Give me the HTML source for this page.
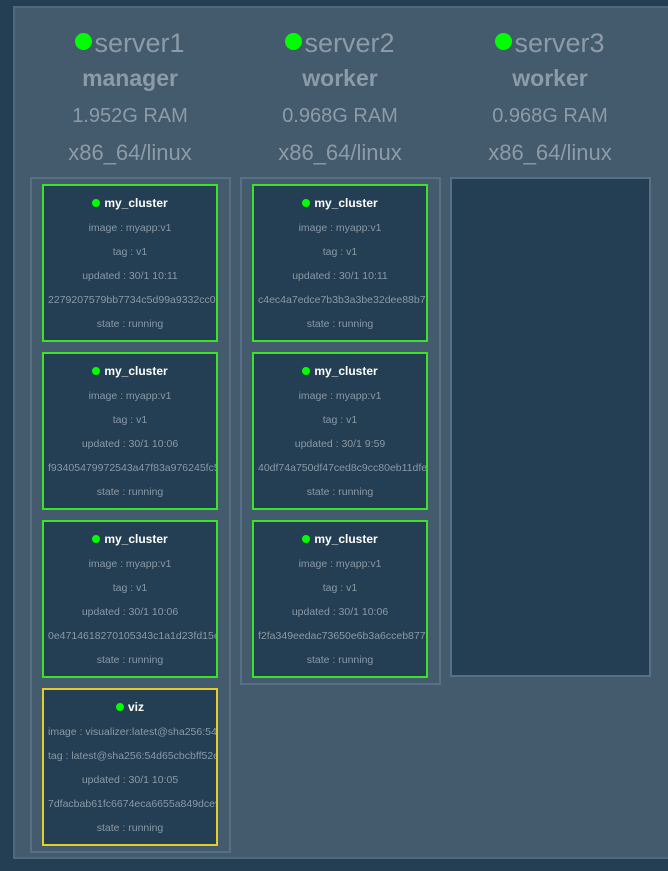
<!DOCTYPE html>
<html><head><style>
*{margin:0;padding:0;box-sizing:border-box}
body{width:668px;height:871px;background:#243f53;font-family:"Liberation Sans",sans-serif;position:relative;overflow:hidden}
.panel{position:absolute;left:13px;top:6px;width:670px;height:853px;background:#445b6d;border:2px solid #52697b}
.hdr{position:absolute;width:210px;text-align:center;color:#8d9ba8}
.name{top:28px;font-size:27px}
.name .d{display:inline-block;width:17px;height:17px;border-radius:50%;background:#00ff00;vertical-align:2px;margin-right:2px}
.role{top:65px;font-size:23px;font-weight:bold}
.ram{top:105px;font-size:20px}
.arch{top:140px;font-size:22px}
.col{position:absolute;top:177px;width:201px;border:2px solid #587085;background:#445b6d}
.card{position:absolute;left:10px;width:176px;height:158px;background:#243f53;border:2px solid #3be22a;overflow:hidden;color:#8a99a5;font-size:10.5px;text-align:center}
.card.y{border-color:#e3cc2c}
.card div{position:absolute;left:0;width:600px;white-space:nowrap}
.card .c{left:0;width:172px}
.card .l{left:4px;text-align:left}
.t{color:#fff;font-weight:bold;font-size:12px}
.t span{display:inline-block;width:8px;height:8px;border-radius:50%;background:#00ff00;margin-right:4px;vertical-align:0}
</style></head><body>
<div class="panel"></div>
<div class="hdr name" style="left:25px"><span class="d"></span>server1</div>
<div class="hdr role" style="left:25px">manager</div>
<div class="hdr ram" style="left:25px">1.952G RAM</div>
<div class="hdr arch" style="left:25px">x86_64/linux</div>
<div class="hdr name" style="left:235px"><span class="d"></span>server2</div>
<div class="hdr role" style="left:235px">worker</div>
<div class="hdr ram" style="left:235px">0.968G RAM</div>
<div class="hdr arch" style="left:235px">x86_64/linux</div>
<div class="hdr name" style="left:445px"><span class="d"></span>server3</div>
<div class="hdr role" style="left:445px">worker</div>
<div class="hdr ram" style="left:445px">0.968G RAM</div>
<div class="hdr arch" style="left:445px">x86_64/linux</div>

<div class="col" style="left:30px;height:676px">
<div class="card" style="top:5px"><div class="c t" style="top:10px"><span></span>my_cluster</div><div class="c" style="top:36px">image : myapp:v1</div><div class="c" style="top:60px">tag : v1</div><div class="c" style="top:84px">updated : 30/1 10:11</div><div class="l" style="top:108px">2279207579bb7734c5d99a9332cc06</div><div class="c" style="top:132px">state : running</div></div>
<div class="card" style="top:173px"><div class="c t" style="top:10px"><span></span>my_cluster</div><div class="c" style="top:36px">image : myapp:v1</div><div class="c" style="top:60px">tag : v1</div><div class="c" style="top:84px">updated : 30/1 10:06</div><div class="l" style="top:108px">f93405479972543a47f83a976245fc5</div><div class="c" style="top:132px">state : running</div></div>
<div class="card" style="top:341px"><div class="c t" style="top:10px"><span></span>my_cluster</div><div class="c" style="top:36px">image : myapp:v1</div><div class="c" style="top:60px">tag : v1</div><div class="c" style="top:84px">updated : 30/1 10:06</div><div class="l" style="top:108px">0e4714618270105343c1a1d23fd15e</div><div class="c" style="top:132px">state : running</div></div>
<div class="card y" style="top:509px"><div class="c t" style="top:10px"><span></span>viz</div><div class="l" style="top:36px">image : visualizer:latest@sha256:54d</div><div class="l" style="top:60px">tag : latest@sha256:54d65cbcbff52e</div><div class="c" style="top:84px">updated : 30/1 10:05</div><div class="l" style="top:108px">7dfacbab61fc6674eca6655a849dce9</div><div class="c" style="top:132px">state : running</div></div>
</div>

<div class="col" style="left:240px;height:508px">
<div class="card" style="top:5px"><div class="c t" style="top:10px"><span></span>my_cluster</div><div class="c" style="top:36px">image : myapp:v1</div><div class="c" style="top:60px">tag : v1</div><div class="c" style="top:84px">updated : 30/1 10:11</div><div class="l" style="top:108px">c4ec4a7edce7b3b3a3be32dee88b73</div><div class="c" style="top:132px">state : running</div></div>
<div class="card" style="top:173px"><div class="c t" style="top:10px"><span></span>my_cluster</div><div class="c" style="top:36px">image : myapp:v1</div><div class="c" style="top:60px">tag : v1</div><div class="c" style="top:84px">updated : 30/1 9:59</div><div class="l" style="top:108px">40df74a750df47ced8c9cc80eb11dfe</div><div class="c" style="top:132px">state : running</div></div>
<div class="card" style="top:341px"><div class="c t" style="top:10px"><span></span>my_cluster</div><div class="c" style="top:36px">image : myapp:v1</div><div class="c" style="top:60px">tag : v1</div><div class="c" style="top:84px">updated : 30/1 10:06</div><div class="l" style="top:108px">f2fa349eedac73650e6b3a6cceb877f</div><div class="c" style="top:132px">state : running</div></div>
</div>

<div class="col" style="left:450px;height:500px;background:#243f53"></div>
</body></html>
